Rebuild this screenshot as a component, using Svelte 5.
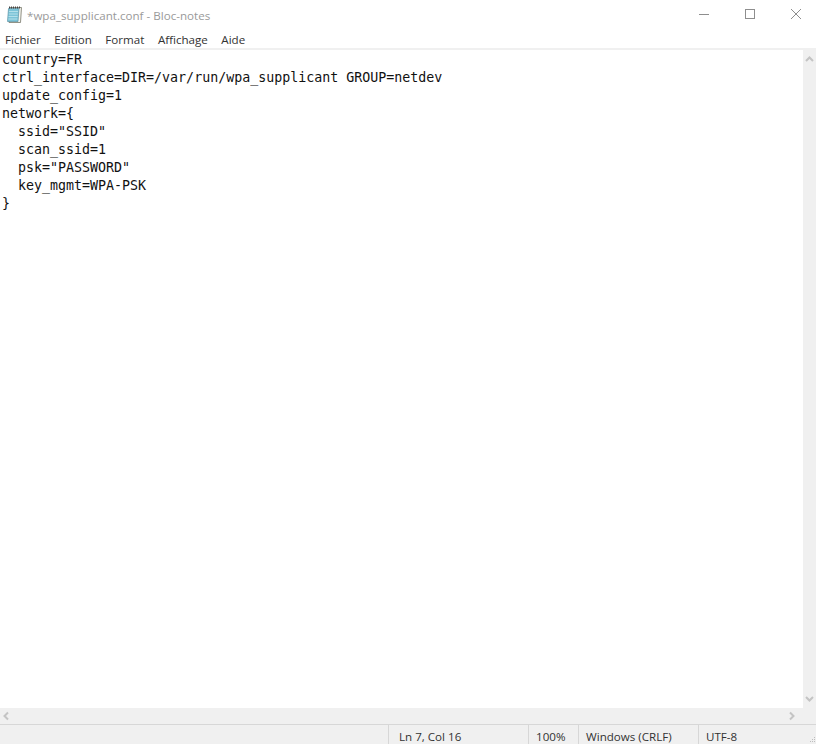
<script>
    const lines = [
        'country=FR',
        'ctrl_interface=DIR=/var/run/wpa_supplicant GROUP=netdev',
        'update_config=1',
        'network={',
        '  ssid="SSID"',
        '  scan_ssid=1',
        '  psk="PASSWORD"',
        '  key_mgmt=WPA-PSK',
        '}'
    ];
    const menus = ['Fichier', 'Edition', 'Format', 'Affichage', 'Aide'];
</script>

<main class="window">
    <header class="titlebar">
        <svg class="app-icon" width="16" height="17" viewBox="0 0 16 17">
            <path d="M4 1.500h11.500l-1 15H3z" fill="#f4f4ee" stroke="#77776a" stroke-width="0.8"/>
            <path d="M2.500 2.500h10.500l-1 13H1.500z" fill="#7cc4d8" stroke="#5b93a6" stroke-width="0.7"/>
            <path d="M3 5.500h9M2.800 8h9M2.600 10.500h9M2.400 13h9" stroke="#b4e0ea" stroke-width="1"/>
            <path d="M3.500 0.500v2M5.500 0.500v2M7.500 0.500v2M9.500 0.500v2M11.500 0.500v2M13.500 0.500v2" stroke="#444" stroke-width="1"/>
        </svg>
        <span class="title">*wpa_supplicant.conf - Bloc-notes</span>
        <div class="controls">
            <svg width="46" height="30" viewBox="0 0 46 30"><path d="M18 14.500h10" stroke="#8e8e8e"/></svg>
            <svg width="46" height="30" viewBox="0 0 46 30"><rect x="18.500" y="9.500" width="9" height="9" fill="none" stroke="#8e8e8e"/></svg>
            <svg width="46" height="30" viewBox="0 0 46 30"><path d="M18 9l10 10M28 9L18 19" stroke="#8e8e8e" fill="none"/></svg>
        </div>
    </header>

    <nav class="menubar">
        {#each menus as item}
            <span>{item}</span>
        {/each}
    </nav>

    <section class="body">
        <pre class="editor">{lines.join('\n')}</pre>
        <div class="vscroll">
            <svg width="13" height="13" viewBox="0 0 13 13"><path d="M3 8l3.500-3.500L10 8" fill="none" stroke="#c4c4c4" stroke-width="2"/></svg>
            <svg width="13" height="13" viewBox="0 0 13 13"><path d="M3 5l3.500 3.500L10 5" fill="none" stroke="#c4c4c4" stroke-width="2"/></svg>
        </div>
    </section>

    <div class="hscroll">
        <svg width="13" height="16" viewBox="0 0 13 16"><path d="M8 4.500L4.500 8 8 11.500" fill="none" stroke="#c4c4c4" stroke-width="2"/></svg>
        <svg width="13" height="16" viewBox="0 0 13 16"><path d="M5 4.500L8.500 8 5 11.500" fill="none" stroke="#c4c4c4" stroke-width="2"/></svg>
    </div>

    <footer class="statusbar">
        <span class="cell pos">Ln 7, Col 16</span>
        <span class="cell zoom">100%</span>
        <span class="cell eol">Windows (CRLF)</span>
        <span class="cell enc">UTF-8</span>
        <svg class="grip" width="7" height="7" viewBox="0 0 7 7">
            <path d="M5 0h1v1H5zM3 2h1v1H3zM5 2h1v1H5zM1 4h1v1H1zM3 4h1v1H3zM5 4h1v1H5z" fill="#bdbdbd"/>
        </svg>
    </footer>
</main>

<style>
    :global(body) {
        margin: 0;
        background: #fff;
    }
    .window {
        width: 816px;
        height: 744px;
        display: flex;
        flex-direction: column;
        overflow: hidden;
        font-family: "Open Sans", "Noto Sans", sans-serif;
        font-size: 11.6px;
        color: #1a1a1a;
    }
    .titlebar {
        height: 30px;
        flex: none;
        display: flex;
        align-items: center;
        padding-left: 6px;
    }
    .app-icon {
        margin-right: 5px;
        margin-top: -2px;
    }
    .title {
        color: #9a9a9a;
    }
    .controls {
        margin-left: auto;
        display: flex;
        margin-right: -3px;
    }
    .controls svg {
        display: block;
    }
    .menubar {
        height: 18px;
        flex: none;
        display: flex;
        align-items: center;
        gap: 13.500px;
        padding-left: 5px;
        border-bottom: 2px solid #f0f0f0;
        color: #333;
    }
    .body {
        flex: 1;
        display: flex;
        min-height: 0;
    }
    .editor {
        flex: 1;
        margin: 0;
        padding: 1px 0 0 2px;
        font-family: "DejaVu Sans Mono", "Liberation Mono", monospace;
        font-size: 13.3px;
        line-height: 18px;
        color: #111;
    }
    .vscroll {
        width: 13px;
        background: #f0f0f0;
        display: flex;
        flex-direction: column;
        justify-content: space-between;
        padding: 3px 0;
    }
    .vscroll svg,
    .hscroll svg {
        display: block;
    }
    .hscroll {
        height: 16px;
        flex: none;
        background: #f0f0f0;
        display: flex;
        justify-content: space-between;
        padding-right: 18px;
    }
    .statusbar {
        height: 20px;
        flex: none;
        background: #f0f0f0;
        border-top: 1px solid #d7d7d7;
        box-sizing: border-box;
        display: flex;
        padding-left: 388px;
        color: #333;
    }
    .cell {
        border-left: 1px solid #d7d7d7;
        line-height: 24px;
        box-sizing: border-box;
        white-space: nowrap;
    }
    .pos { width: 140px; padding-left: 10px; }
    .zoom { width: 50px; padding-left: 7px; }
    .eol { width: 120px; padding-left: 7px; }
    .enc { flex: 1; padding-left: 7px; }
    .grip {
        align-self: flex-end;
        display: block;
    }
</style>
